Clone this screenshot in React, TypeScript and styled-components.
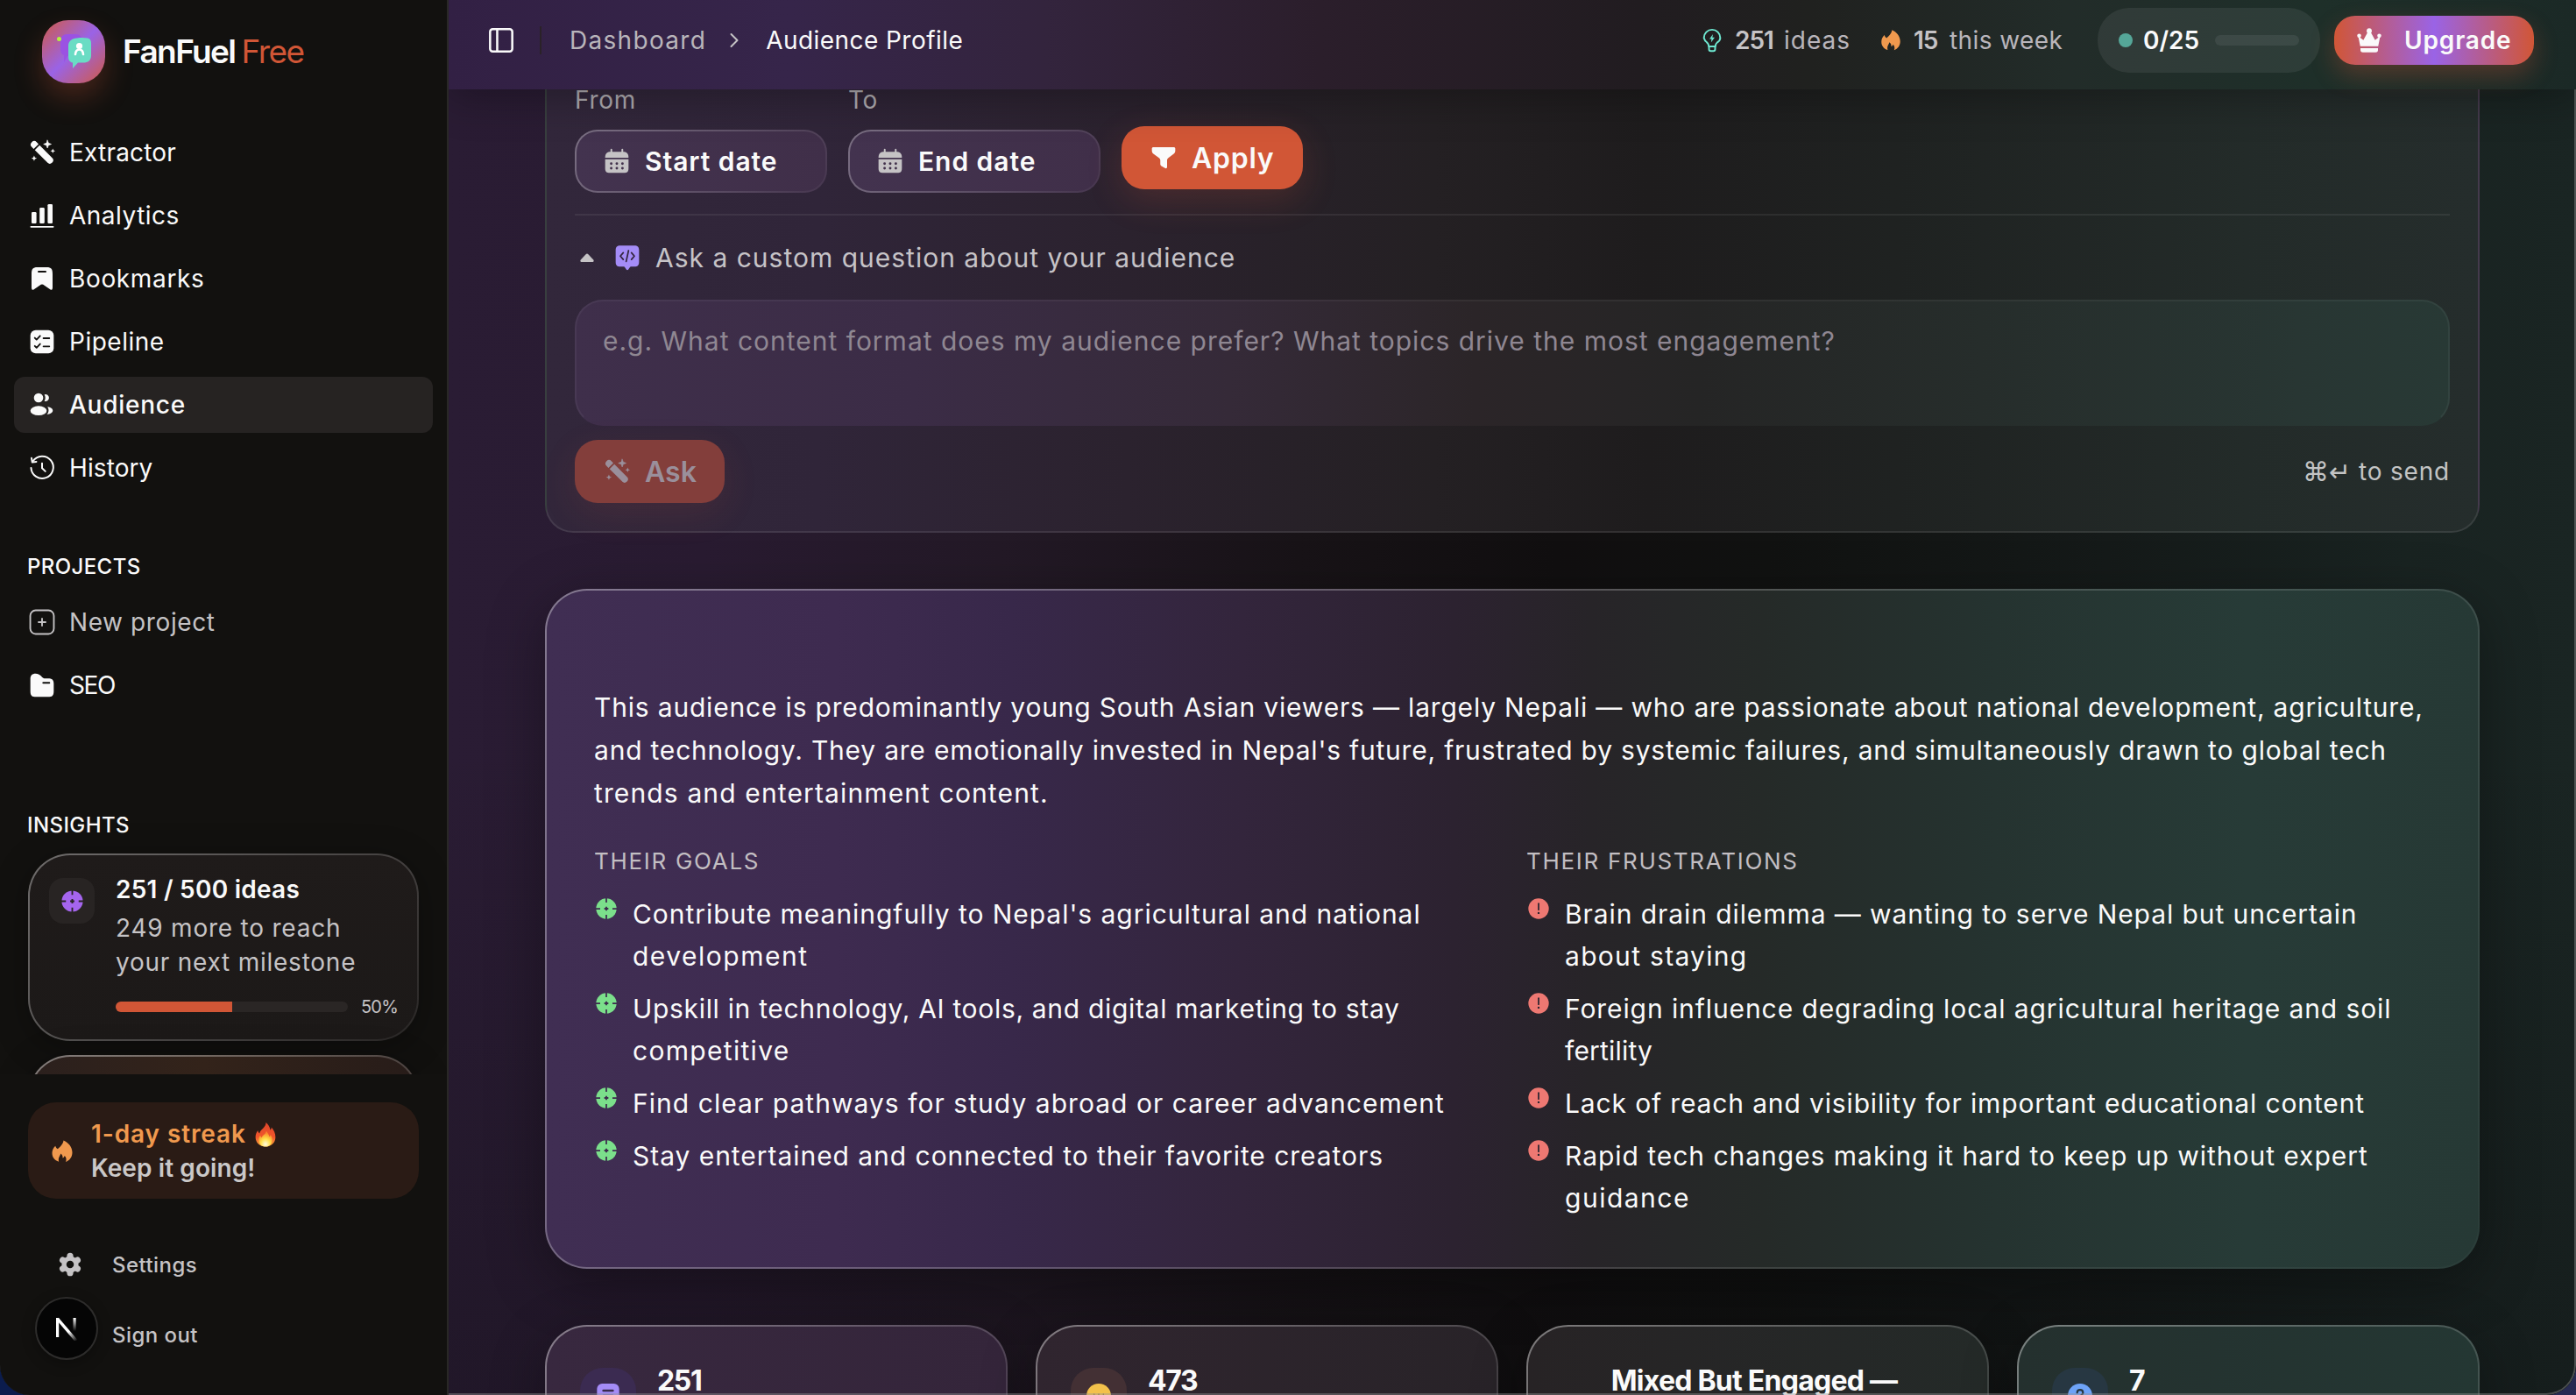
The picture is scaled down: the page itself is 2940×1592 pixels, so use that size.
import React from 'react';
import styled, { createGlobalStyle, css } from 'styled-components';

const colors = {
  sidebar: '#12110f',
  text: '#fafafa',
  muted: '#c5c3c5',
  primary: '#d15636',
  purple: '#9a63e6',
  violet: '#a48cf7',
  orange: '#f0994e',
  teal: '#6ee7d0',
  green: '#7bdf8b',
  red: '#ee7872',
};

const GlobalStyle = createGlobalStyle`
  * {
    box-sizing: border-box;
  }
  body {
    margin: 0;
    background: linear-gradient(90deg, #0b1c4d, #272b52);
    font-family: Inter, 'Open Sans', sans-serif;
    color: ${colors.text};
    overflow: hidden;
  }
  p, ul, h1, h2 {
    margin: 0;
    padding: 0;
    list-style: none;
  }
  svg {
    display: block;
    flex: none;
  }
`;

/* ---------- icons ---------- */

type IconProps = { size?: number; color?: string; cut?: string };

const Svg = ({ size = 32, children }: { size?: number; children: React.ReactNode }) => (
  <svg width={size} height={size} viewBox="0 0 24 24" fill="none" strokeLinecap="round" strokeLinejoin="round">
    {children}
  </svg>
);

const WandIcon = ({ size, color = colors.text }: IconProps) => (
  <Svg size={size}>
    <g fill={color}>
      <path d="M3.2 7.4a2.9 2.9 0 0 1 4.2-4.2L9 4.8 4.8 9z" />
      <path d="M9.9 5.8 20.7 16.6a2.9 2.9 0 0 1-4.1 4.1L5.8 9.9z" />
      <path d="M16.6 1.6 17.5 4l2.4.9-2.4.9-.9 2.4-.9-2.4-2.4-.9 2.4-.9z" stroke={color} strokeWidth=".5" />
      <path d="m21.2 8.6.6 1.5 1.5.6-1.5.6-.6 1.5-.6-1.5-1.5-.6 1.5-.6z" />
      <path d="m5.2 14.6.7 1.7 1.7.7-1.7.7-.7 1.7-.7-1.7-1.7-.7 1.7-.7z" />
    </g>
  </Svg>
);

const ChartIcon = () => (
  <Svg>
    <g fill={colors.text}>
      <rect x="3" y="9" width="4.2" height="9.8" rx="1" />
      <rect x="9.9" y="5.2" width="4.2" height="13.6" rx="1" />
      <rect x="16.8" y="2.2" width="4.2" height="16.6" rx="1" />
    </g>
    <path d="M2.5 21.6h19" stroke={colors.text} strokeWidth="1.3" />
  </Svg>
);

const BookmarkIcon = () => (
  <Svg>
    <path
      d="M3 8.2C3 3.6 4 2.2 8 2.2h8c4 0 5 1.4 5 6v11.4c0 2-1.200 2.500-2.600 1.300L14 17.800c-1.400-1.200-2.600-1.200-4 0l-4.400 3.100C4.200 22.100 3 21.600 3 19.600z"
      fill={colors.text}
    />
    <path d="M9 6h6" stroke={colors.sidebar} strokeWidth="1.5" />
  </Svg>
);

const ChecklistIcon = () => (
  <Svg>
    <rect x="2" y="2" width="20" height="20" rx="4.600" fill={colors.text} />
    <path
      d="m5.800 8.700 1.500 1.500 3-3.200M5.800 15.600l1.500 1.500 3-3.200M13.200 9h5M13.200 16h5"
      stroke={colors.sidebar}
      strokeWidth="1.4"
    />
  </Svg>
);

const UsersIcon = () => (
  <Svg>
    <g fill={colors.text}>
      <circle cx="9" cy="6" r="4" />
      <ellipse cx="9" cy="17" rx="7" ry="4" />
      <path d="M14 3.200A5.800 5.800 0 0 1 14 8.900a3 3 0 1 0 0-5.700z" />
      <path d="M16.600 13.600c1.400 1.900 1.400 4.700-.5 6.500 2.900-.1 5.100-1.400 5.100-3.200s-1.900-3.100-4.600-3.300z" />
    </g>
  </Svg>
);

const HistoryIcon = () => (
  <Svg>
    <g stroke={colors.text} strokeWidth="1.500">
      <path d="M4.200 6.200A9.500 9.500 0 1 1 2.600 12" />
      <path d="M3 3.600l.6 3.500 3.500-.4M12 8v4.200l2.800 2.700" />
    </g>
  </Svg>
);

const PlusSquareIcon = () => (
  <Svg>
    <rect x="1.900" y="1.900" width="20.200" height="20.200" rx="4.600" stroke={colors.muted} strokeWidth="1.400" />
    <path d="M12 9v6M9 12h6" stroke={colors.muted} strokeWidth="1.400" />
  </Svg>
);

const FolderIcon = () => (
  <Svg>
    <path
      d="M2 6.400C2 3.600 3.600 2 6.400 2c2.200 0 3.200.6 4.600 2l1.200 1.200c.8.7 1.400.9 2.400.9H17c3.600 0 5 1.200 5 4.500V17c0 3.800-1.200 5-5 5H7c-3.800 0-5-1.200-5-5z"
      fill={colors.text}
    />
    <path d="M13 10h5.200" stroke={colors.sidebar} strokeWidth="1.500" />
  </Svg>
);

const TargetIcon = ({ size, color, cut = colors.sidebar }: IconProps) => (
  <Svg size={size}>
    <circle cx="12" cy="12" r="10" fill={color} />
    <path d="M12 1.500v4.500M12 18v4.500M1.500 12h4.500M18 12h4.500" stroke={cut} strokeWidth="1.500" strokeLinecap="butt" />
    <path d="M12 10v4M10 12h4" stroke={cut} strokeWidth="1.600" strokeLinecap="butt" />
  </Svg>
);

const AlertIcon = ({ size, color, cut }: IconProps) => (
  <Svg size={size}>
    <circle cx="12" cy="12" r="10" fill={color} />
    <path d="M12 7v6" stroke={cut} strokeWidth="1.500" />
    <circle cx="12" cy="16.200" r="1" fill={cut} />
  </Svg>
);

const FlameIcon = ({ size }: IconProps) => (
  <Svg size={size}>
    <path
      d="M13.200 2c4.300 1.700 8 6 8 11 0 4-2.300 7.200-6 8.600.9-1.900.6-4-1-5.600-.5 1.200-1 1.700-1.800 2 .2-1.600-.4-3-1.800-4-.3 2-2.600 3.300-1.700 7.400C5.100 20.200 2.800 17.300 2.800 13.400c0-2.800 1.300-5.100 3-6.500.4 1.500 1.100 2.400 2.200 2.900C9.700 8 12.700 5.700 13.200 2z"
      fill={colors.orange}
    />
  </Svg>
);

const FireEmoji = () => (
  <svg width="26" height="30" viewBox="0 0 24 26">
    <defs>
      <linearGradient id="fire" x1="0" y1="0" x2="0" y2="1">
        <stop offset="0" stopColor="#e0452a" />
        <stop offset=".6" stopColor="#f0562b" />
        <stop offset="1" stopColor="#f7a93b" />
      </linearGradient>
      <radialGradient id="core" cx=".5" cy=".85" r=".7">
        <stop offset="0" stopColor="#fffbe0" />
        <stop offset=".5" stopColor="#ffe04a" />
        <stop offset="1" stopColor="#f98b2b" />
      </radialGradient>
    </defs>
    <path
      d="M12.500 0c2.300 2 4.200 4.300 4.500 8 .9-.8 1.300-1.600 1.300-2.800C20.800 8 22.500 11.500 22.500 15.500 22.500 21.500 18 25.500 12 25.500S1.500 21.500 1.500 15.600c0-3 1-5.400 2.500-7.300.2 1.600.7 2.500 1.700 3.200C6.500 7 12.500 5.500 12.500 0z"
      fill="url(#fire)"
    />
    <path
      d="M12.800 9c1.200 2 3 3.500 3.300 6 .8-.5 1-1.200 1-2 1.400 1.500 2 3.200 2 5 0 4.500-3 7.500-7 7.500s-7.200-2.800-7.200-7c0-2 .6-3.500 1.600-4.800.3 1.200.8 1.800 1.500 2.200C8.800 13 12.500 12.500 12.800 9z"
      fill="url(#core)"
    />
  </svg>
);

const GearIcon = () => (
  <Svg>
    <path d="M12 4.700v14.600M5.700 8.300l12.600 7.400M5.700 15.700l12.600-7.400" stroke={colors.muted} strokeWidth="5.400" />
    <circle cx="12" cy="12" r="7.200" fill={colors.muted} />
    <circle cx="12" cy="12" r="3.200" fill={colors.sidebar} />
  </Svg>
);

const PanelIcon = () => (
  <Svg>
    <rect x="2.500" y="2.500" width="19" height="19" rx="2.200" stroke={colors.text} strokeWidth="1.900" />
    <path d="M8.600 2.500v19" stroke={colors.text} strokeWidth="1.900" />
  </Svg>
);

const ChevronIcon = () => (
  <Svg size={24}>
    <path d="m8.500 5 7 7-7 7" stroke={colors.muted} strokeWidth="2" />
  </Svg>
);

const BulbIcon = () => (
  <Svg size={28}>
    <g stroke={colors.teal} strokeWidth="1.700">
      <path d="M8.600 18v-1c0-1.300-.8-2-1.700-3A8 8 0 0 1 4 9.600a8 8 0 0 1 16 0c0 1.800-1 3.200-2.900 4.400-1 1-1.700 1.700-1.700 3v1zM9 18.500v2c0 1.200.6 1.900 1.800 1.900h2.400c1.200 0 1.800-.7 1.800-1.900v-2" />
    </g>
    <path d="m12.800 6-3.300 4.700h2L11 14.200l3.500-5h-2.200z" fill={colors.teal} />
  </Svg>
);

const CrownIcon = () => (
  <Svg>
    <g fill={colors.text}>
      <circle cx="12" cy="3.900" r="2.200" />
      <circle cx="3.400" cy="8" r="1.700" />
      <circle cx="20.600" cy="8" r="1.700" />
      <path d="M2.600 8.500 4.300 17h15.400l1.700-8.500-4.400 3.400L12.700 4h-1.400L7 11.900z" />
      <path d="M4.500 18.700h15v1.600c0 1.300-.7 2-2 2h-11c-1.300 0-2-.7-2-2z" />
    </g>
  </Svg>
);

const CalendarIcon = () => (
  <Svg>
    <path d="M7.300 2v4M16.700 2v4" stroke={colors.muted} strokeWidth="1.500" />
    <path d="M2 9C2 5.400 3.600 4 7 4h10c3.400 0 5 1.400 5 5z" fill={colors.muted} />
    <path d="M2 10.400h20V18c0 3-1.200 4-4 4H6c-2.800 0-4-1-4-4z" fill={colors.muted} />
    {[7.2, 12, 16.8].map((x) =>
      [14, 18].map((y) => <circle key={`${x}-${y}`} cx={x} cy={y} r="1.100" fill="#42324c" />)
    )}
  </Svg>
);

const FilterIcon = () => (
  <Svg>
    <path
      d="M2 4.200C2 3.400 2.500 3 3.400 3h17.200c.9 0 1.400.4 1.400 1.200v1.600c0 1.400-.4 2.200-1.500 3.100L16.300 12c-1 .8-1.300 1.300-1.300 2.500v5.200c0 1.400-.8 1.800-1.900 1.100l-2.600-1.500c-1-.6-1.300-1.100-1.300-2.100v-2.700c0-1.200-.3-1.700-1.300-2.500L3.500 8.900C2.400 8 2 7.200 2 5.800z"
      fill={colors.text}
    />
  </Svg>
);

const CodeBubbleIcon = () => (
  <Svg>
    <path
      d="M6 1.700h12c2.800 0 4 1.200 4 4v10c0 2.800-1.200 4-4 4h-2.600c-.8 0-1 .3-1.500 1l-1 1.500c-.5.700-1.300.700-1.800 0l-1-1.500c-.5-.7-.7-1-1.500-1H6c-2.800 0-4-1.200-4-4v-10c0-2.800 1.200-4 4-4z"
      fill={colors.violet}
    />
    <path d="M8.500 7.800 6 10.700l2.500 2.900M15.500 7.800l2.500 2.900-2.500 2.900M13 6l-2 9.300" stroke="#33253f" strokeWidth="1.300" />
  </Svg>
);

const CaretIcon = () => (
  <svg width="18" height="12" viewBox="0 0 18 12">
    <path d="M7.600 2.200 1.700 8.600C1 9.400 1.300 11 2.500 11h13c1.200 0 1.500-1.600.8-2.400L10.400 2.200c-.8-.9-2-.9-2.800 0z" fill={colors.muted} />
  </svg>
);

const NoteIcon = () => (
  <Svg>
    <rect x="2.500" y="1.500" width="19" height="21" rx="4.500" fill={colors.violet} />
    <path d="M8 7.500h8M8 12h8" stroke="#3b2c4e" strokeWidth="2" />
  </Svg>
);

const FaceIcon = () => (
  <Svg>
    <circle cx="12" cy="12" r="10.500" fill="#f3c14b" />
    <path d="M8 10.500v2M12 10.500v2M16 10.500v2" stroke="#a07a38" strokeWidth="1" />
  </Svg>
);

const QuestionIcon = () => (
  <Svg>
    <circle cx="12" cy="12" r="10.500" fill="#6ea3f7" />
    <path d="M9.500 9.300c0-3.300 5-3.300 5 0 0 1.800-2.500 2-2.500 4" stroke="#27373f" strokeWidth="1.600" />
  </Svg>
);

const LogoMark = () => (
  <svg width="72" height="72" viewBox="0 0 72 72">
    <path d="M29 16h9c5 0 8 3 8 8v9c0 5-3 8-8 8h-9l-4 7v-8c-3-1-4-4-4-7v-9c0-5 3-8 8-8z" fill="#9b52e2" />
    <path
      d="M40 20.500c5-.8 8-.5 12 0 3 .6 4 2.500 4 6V40c0 5-2 7.500-7 8.500h-8L35 55v-6.500c-4-.7-5-3.500-5-7.500V29c0-5 4-8 10-8.500z"
      fill="#6adcc4"
    />
    <circle cx="42.500" cy="29.500" r="3.600" fill="#fff" />
    <path d="M38 39c.3-3.600 2-5.500 4.500-5.500S46.700 35.400 47 39" stroke="#fff" strokeWidth="2.600" fill="none" strokeLinecap="round" />
    <circle cx="19.500" cy="21.500" r="2.500" fill="#b5f23d" />
  </svg>
);

const NextMark = () => (
  <svg width="28" height="28" viewBox="0 0 28 28">
    <defs>
      <linearGradient id="stem" x1="0" y1="0" x2="0" y2="1">
        <stop offset="0" stopColor="#fff" />
        <stop offset="1" stopColor="#fff" stopOpacity="0" />
      </linearGradient>
      <linearGradient id="slash" gradientUnits="userSpaceOnUse" x1="16" y1="18" x2="26" y2="28">
        <stop offset="0" stopColor="#fff" />
        <stop offset="1" stopColor="#fff" stopOpacity="0" />
      </linearGradient>
    </defs>
    <rect x="2" y="2" width="3.200" height="22" fill="#fff" />
    <path d="M3.500 2.800 25 28" stroke="url(#slash)" strokeWidth="3.400" />
    <rect x="21.500" y="2" width="3.200" height="15" fill="url(#stem)" />
  </svg>
);

/* ---------- shared ---------- */

type TextProps = { $track?: number };

const track = css<TextProps>`
  letter-spacing: ${(p) => p.$track ?? 0}px;
`;

const glassBorder = (fill: string, from = 0.3, to = 0.06) => css`
  border: 2px solid transparent;
  background: ${fill} padding-box,
    linear-gradient(135deg, rgba(255, 255, 255, ${from}), rgba(255, 255, 255, ${to})) border-box,
    ${fill} border-box;
`;

const Shell = styled.div`
  position: relative;
  display: flex;
  width: 2940px;
  height: 1592px;
  border-radius: 0 0 34px 34px;
  overflow: hidden;
  background: #100f10;
`;

/* window outline, drawn over everything */
const Frame = styled.div`
  position: absolute;
  inset: 0;
  border: 2px solid rgba(150, 150, 150, 0.42);
  border-top: 0;
  border-radius: 0 0 34px 34px;
  pointer-events: none;
`;

/* ---------- sidebar ---------- */

const Sidebar = styled.aside`
  position: relative;
  z-index: 2;
  display: flex;
  flex-direction: column;
  width: 512px;
  background: ${colors.sidebar};
  border-right: 2px solid #292826;
`;

const SidebarScroll = styled.div`
  height: 1226px;
  overflow: hidden;
`;

const Brand = styled.div`
  display: flex;
  align-items: center;
  gap: 20px;
  padding: 22px 0 0 48px;
`;

const BrandBadge = styled.div`
  width: 72px;
  height: 72px;
  border-radius: 30px;
  background: linear-gradient(135deg, #d15a45 0%, #9a63e6 50%, #d15a45 100%);
  box-shadow: 0 16px 32px rgba(209, 86, 54, 0.28);
`;

const BrandName = styled.div`
  display: flex;
  gap: 7px;
  font-size: 37px;
  line-height: 74px;
  font-weight: 600;
  letter-spacing: -1.6px;
`;

const Plan = styled.span`
  font-weight: 400;
  letter-spacing: -1.5px;
  color: ${colors.primary};
`;

const Nav = styled.nav`
  display: flex;
  flex-direction: column;
  gap: 8px;
  padding: 46px 16px 0;
`;

const NavItem = styled.a<{ $active?: boolean; $muted?: boolean; $track?: number }>`
  display: flex;
  align-items: center;
  gap: 15px;
  height: 64px;
  padding: 0 16px;
  border-radius: 12px;
  font-size: 28px;
  font-weight: ${(p) => (p.$active ? 500 : 400)};
  color: ${(p) => (p.$muted ? colors.muted : colors.text)};
  background: ${(p) => (p.$active ? '#262322' : 'transparent')};
  ${track}
`;

const GroupTitle = styled.h2<{ $top: number }>`
  padding-left: 31px;
  margin-top: ${(p) => p.$top}px;
  font-size: 24px;
  line-height: 32px;
  font-weight: 500;
  letter-spacing: 0.4px;
`;

const ProjectList = styled(Nav)`
  padding-top: 15px;
`;

const Insights = styled.div`
  display: flex;
  flex-direction: column;
  gap: 16px;
  padding: 16px 32px 0;
`;

const InsightCard = styled.div<{ $warm?: boolean }>`
  display: flex;
  gap: 24px;
  height: 214px;
  padding: 20px 22px;
  border-radius: 48px;
  box-shadow: 0 8px 40px rgba(0, 0, 0, 0.3);
  ${(p) =>
    p.$warm
      ? glassBorder('linear-gradient(90deg, #2b201d, #33231a 45%, #271c19)', 0.42)
      : glassBorder('linear-gradient(#1f1b1a, #1c1918)', 0.36)}
`;

const InsightIcon = styled.div`
  display: grid;
  place-items: center;
  flex: none;
  width: 52px;
  height: 52px;
  margin-top: 6px;
  border-radius: 16px;
  background: #282423;
`;

const InsightBody = styled.div`
  flex: 1;
  color: ${colors.muted};
  font-size: 28px;
  line-height: 39px;
`;

const InsightTitle = styled.div`
  height: 44px;
  line-height: 38px;
  font-weight: 600;
  letter-spacing: 0.25px;
  color: ${colors.text};
`;

const InsightLine = styled.div<TextProps>`
  white-space: nowrap;
  ${track}
`;

const ProgressRow = styled.div`
  display: flex;
  align-items: center;
  gap: 15px;
  margin-top: 15px;
  font-size: 20px;
  line-height: 32px;
  letter-spacing: -0.8px;
`;

const Progress = styled.div`
  width: 265px;
  height: 12px;
  border-radius: 6px;
  overflow: hidden;
  background: #2a2625;
`;

const ProgressFill = styled.div`
  height: 100%;
  background: ${colors.primary};
`;

const SidebarFooter = styled.div`
  display: flex;
  flex-direction: column;
  padding: 32px 32px 0;
`;

const Streak = styled.div`
  display: flex;
  align-items: center;
  gap: 18px;
  height: 110px;
  padding: 2px 0 0 24px;
  border-radius: 32px;
  background: #2a1b15;
  font-size: 28px;
  line-height: 39px;
  font-weight: 600;
  letter-spacing: 0.1px;
  color: #cac8c8;
`;

const StreakTitle = styled.div`
  display: flex;
  align-items: center;
  gap: 9px;
  letter-spacing: 0.9px;
  color: ${colors.orange};
`;

const FooterLinks = styled.div`
  display: flex;
  flex-direction: column;
  gap: 16px;
  padding: 43px 0 0 8px;
`;

const FooterLink = styled.a`
  display: flex;
  align-items: center;
  height: 64px;
  font-size: 24px;
  font-weight: 500;
  letter-spacing: 0.45px;
  color: ${colors.muted};
`;

const FooterIcon = styled.span`
  display: grid;
  place-items: center;
  width: 80px;
  margin-right: 8px;
`;

const DevBadge = styled.span`
  display: grid;
  place-items: center;
  width: 72px;
  height: 72px;
  margin: -14px 16px 0 0;
  border: 2px solid #2d2c2b;
  border-radius: 50%;
  background: #050505;
  box-shadow: 0 4px 16px rgba(0, 0, 0, 0.3);
`;

/* ---------- header ---------- */

const Main = styled.main`
  flex: 1;
  min-width: 0;
  display: flex;
  flex-direction: column;
`;

const Header = styled.header`
  position: relative;
  z-index: 1;
  display: flex;
  align-items: center;
  flex: none;
  height: 102px;
  padding: 0 48px 11px 44px;
  font-size: 28px;
  color: ${colors.muted};
  background: linear-gradient(
    90deg,
    #322044 0%,
    #36254a 16%,
    #33243d 28%,
    #2b1e2b 41%,
    #211c20 56%,
    #20211f 64%,
    #222c29 76%,
    #1e2f29 88%,
    #1b2926 100%
  );
  box-shadow: 0 8px 50px rgba(0, 0, 0, 0.3);
`;

const HeaderDivider = styled.div`
  width: 2px;
  height: 32px;
  margin: 0 32px 0 28px;
  background: #2a2228;
`;

const Crumb = styled.span<{ $current?: boolean; $track?: number }>`
  color: ${(p) => (p.$current ? colors.text : '#b9b5bb')};
  ${track}
`;

const CrumbArrow = styled.span`
  padding: 0 24px 0 20px;
`;

const HeaderStat = styled.div<{ $width: number }>`
  display: flex;
  align-items: center;
  width: ${(p) => p.$width}px;
`;

const Spacer = styled.div`
  flex: 1;
`;

const StatNumber = styled.b<{ $width: number }>`
  width: ${(p) => p.$width}px;
  margin-left: 12px;
  font-weight: 600;
  letter-spacing: -1px;
`;

const Quota = styled.div`
  display: flex;
  align-items: center;
  width: 254px;
  height: 74px;
  padding: 0 24px;
  margin-right: 16px;
  border-radius: 36px;
  background: rgba(255, 255, 255, 0.07);
  font-weight: 600;
  color: ${colors.text};
`;

const Dot = styled.span`
  width: 16px;
  height: 16px;
  margin-right: 12px;
  border-radius: 50%;
  background: #55a698;
`;

const QuotaBar = styled.span`
  width: 96px;
  height: 12px;
  margin-left: auto;
  border-radius: 6px;
  background: rgba(255, 255, 255, 0.07);
`;

const Upgrade = styled.button`
  display: flex;
  align-items: center;
  gap: 24px;
  width: 228px;
  height: 56px;
  padding: 0 0 0 24px;
  border: 0;
  border-radius: 24px;
  background: linear-gradient(90deg, #d15636, #9a63e6 50%, #d15636);
  box-shadow: 0 12px 28px rgba(209, 86, 54, 0.3);
  font: 600 28px Inter, sans-serif;
  letter-spacing: 0.85px;
  color: ${colors.text};
`;

/* ---------- content ---------- */

const Content = styled.div`
  flex: 1;
  min-height: 0;
  overflow: hidden;
  padding: 0 110px;
  background: linear-gradient(180deg, rgba(12, 12, 14, 0) 50%, rgba(12, 12, 14, 0.3) 100%),
    linear-gradient(
      90deg,
      #2a1c34 0%,
      #291b31 12%,
      #231926 26%,
      #181317 40%,
      #110f10 52%,
      #111211 62%,
      #151a19 78%,
      #192321 92%,
      #1a2523 100%
    );
`;

const FilterCard = styled.section`
  width: 2208px;
  height: 546px;
  margin-top: -40px;
  padding: 30px 32px;
  border: 2px solid rgba(255, 255, 255, 0.09);
  border-radius: 32px;
  background: linear-gradient(
    90deg,
    #32273b 0%,
    #302539 14%,
    #2b222e 30%,
    #242023 46%,
    #1e1c1d 57%,
    #1f2221 70%,
    #232b29 88%,
    #252d2c 100%
  );
`;

const Filters = styled.div`
  display: flex;
  align-items: flex-end;
  gap: 25px;
  padding-bottom: 24px;
  border-bottom: 2px solid rgba(255, 255, 255, 0.07);
`;

const Field = styled.div`
  width: 287px;
`;

const FieldLabel = styled.div`
  height: 54px;
  padding-top: 8px;
  line-height: 25px;
  font-size: 28px;
  letter-spacing: 0.7px;
  color: #aeaaaf;
`;

const DateButton = styled.button`
  display: flex;
  align-items: center;
  gap: 16px;
  width: 288px;
  height: 72px;
  padding: 0 30px;
  border-radius: 26px;
  font: 600 30px Inter, sans-serif;
  letter-spacing: 0.95px;
  color: ${colors.text};
  ${glassBorder('linear-gradient(90deg, #43334f, #402f49)', 0.3, 0.03)}
`;

const ActionButton = styled.button<{ $disabled?: boolean; $width: number; $track?: number }>`
  display: flex;
  align-items: center;
  gap: 16px;
  width: ${(p) => p.$width}px;
  height: 72px;
  padding: 0 32px;
  border: 0;
  border-radius: 26px;
  background: ${(p) => (p.$disabled ? '#833e3b' : colors.primary)};
  box-shadow: 0 12px 40px rgba(209, 86, 54, ${(p) => (p.$disabled ? 0.12 : 0.2)});
  font: 600 32px Inter, sans-serif;
  color: ${(p) => (p.$disabled ? '#9a8f9b' : colors.text)};
  ${track}
`;

const Lifted = styled.div`
  margin-bottom: 4px;
`;

const QuestionToggle = styled.div`
  display: flex;
  align-items: center;
  height: 96px;
  padding-left: 5px;
  font-size: 30px;
  letter-spacing: 1px;
  color: #c6c3c7;
`;

const ToggleIcon = styled.span`
  margin: 0 16px 0 21px;
`;

const QuestionInput = styled.div`
  height: 144px;
  padding: 22px 30px;
  border: 2px solid rgba(255, 255, 255, 0.05);
  border-bottom-color: transparent;
  border-radius: 32px;
  background: linear-gradient(
      90deg,
      #3f2f4b 0%,
      #3b2c46 18%,
      #352a38 35%,
      #2b2528 48%,
      #252525 60%,
      #262d2b 75%,
      #283633 92%,
      #283935 100%
    )
    border-box;
  font-size: 30px;
  line-height: 47px;
  letter-spacing: 0.99px;
  color: #8f8792;
`;

const AskRow = styled.div`
  display: flex;
  align-items: center;
  justify-content: space-between;
  margin-top: 16px;
`;

const Hint = styled.span`
  display: flex;
  align-items: center;
  font-size: 28px;
  letter-spacing: 0.8px;
  color: #c3c4c4;
`;

const Keys = styled.kbd`
  margin-right: 9px;
  font: 30px 'DejaVu Sans', sans-serif;
  letter-spacing: 0;
`;

const SummaryCard = styled.section`
  width: 2208px;
  height: 776px;
  margin-top: 64px;
  padding: 109px 54px 0;
  border-radius: 48px;
  box-shadow: 0 16px 64px rgba(0, 0, 0, 0.35);
  ${glassBorder(
    `linear-gradient(90deg, #402e53 0%, #3e2b50 15%, #38284a 24%, #33253c 36%, #2c2230 47%,
      #272428 54%, #252a28 63%, #253330 75%, #273b37 88%, #263935 100%)`,
    0.36,
    0.02
  )}
`;

const Paragraph = styled.p`
  font-size: 30px;
  line-height: 48.75px;
  white-space: nowrap;
`;

const Line = styled.span<TextProps>`
  display: block;
  ${track}
`;

const Columns = styled.div`
  display: grid;
  grid-template-columns: 1fr 1fr;
  gap: 32px;
  margin-top: 34px;
`;

const ColumnTitle = styled.h2`
  margin-bottom: 17px;
  font-size: 26px;
  line-height: 39px;
  font-weight: 400;
  letter-spacing: 1.7px;
  color: #c2bec2;
`;

const PointList = styled.ul`
  display: flex;
  flex-direction: column;
  gap: 12px;
`;

const Point = styled.li`
  display: flex;
  gap: 16px;
  font-size: 30px;
  line-height: 48px;
  white-space: nowrap;
`;

const PointIcon = styled.span`
  padding-top: 4px;
`;

const StatGrid = styled.div`
  display: grid;
  grid-template-columns: repeat(4, 528px);
  gap: 32px;
  margin-top: 64px;
`;

const StatCard = styled.div<{ $fill: string; $center?: boolean }>`
  display: flex;
  justify-content: ${(p) => (p.$center ? 'center' : 'flex-start')};
  gap: 24px;
  height: 240px;
  padding: 42px ${(p) => (p.$center ? 46 : 38)}px 0 38px;
  border-radius: 48px;
  box-shadow: 0 16px 64px rgba(0, 0, 0, 0.3);
  ${(p) => glassBorder(p.$fill, 0.4)}
`;

const StatIcon = styled.div<{ $bg: string }>`
  display: grid;
  place-items: center;
  width: 64px;
  height: 64px;
  margin-top: 5px;
  border-radius: 26px;
  background: ${(p) => p.$bg};
`;

const StatValue = styled.div<TextProps>`
  font-size: 32px;
  line-height: 40px;
  font-weight: 700;
  ${track}
`;

/* ---------- data ---------- */

const navItems = [
  { label: 'Extractor', icon: <WandIcon />, track: 0.2 },
  { label: 'Analytics', icon: <ChartIcon />, track: 0.5 },
  { label: 'Bookmarks', icon: <BookmarkIcon />, track: 0.65 },
  { label: 'Pipeline', icon: <ChecklistIcon />, track: 0.5 },
  { label: 'Audience', icon: <UsersIcon />, track: 0.75, active: true },
  { label: 'History', icon: <HistoryIcon />, track: 0.1 },
];

const summary = [
  {
    text: 'This audience is predominantly young South Asian viewers — largely Nepali — who are passionate about national development, agriculture,',
    track: 0.815,
  },
  {
    text: "and technology. They are emotionally invested in Nepal's future, frustrated by systemic failures, and simultaneously drawn to global tech",
    track: 0.79,
  },
  { text: 'trends and entertainment content.', track: 1.13 },
];

const goals = [
  [
    { text: "Contribute meaningfully to Nepal's agricultural and national", track: 0.96 },
    { text: 'development', track: 1.5 },
  ],
  [
    { text: 'Upskill in technology, AI tools, and digital marketing to stay', track: 0.68 },
    { text: 'competitive', track: 1.3 },
  ],
  [{ text: 'Find clear pathways for study abroad or career advancement', track: 1.04 }],
  [{ text: 'Stay entertained and connected to their favorite creators', track: 0.96 }],
];

const frustrations = [
  [
    { text: 'Brain drain dilemma — wanting to serve Nepal but uncertain', track: 0.92 },
    { text: 'about staying', track: 1.3 },
  ],
  [
    { text: 'Foreign influence degrading local agricultural heritage and soil', track: 0.91 },
    { text: 'fertility', track: 0.2 },
  ],
  [{ text: 'Lack of reach and visibility for important educational content', track: 0.86 }],
  [
    { text: 'Rapid tech changes making it hard to keep up without expert', track: 0.97 },
    { text: 'guidance', track: 1.5 },
  ],
];

type PointsProps = { title: string; points: { text: string; track: number }[][]; icon: React.ReactNode };

const Points = ({ title, points, icon }: PointsProps) => (
  <div>
    <ColumnTitle>{title}</ColumnTitle>
    <PointList>
      {points.map((lines) => (
        <Point key={lines[0].text}>
          <PointIcon>{icon}</PointIcon>
          <div>
            {lines.map((line) => (
              <Line key={line.text} $track={line.track}>
                {line.text}
              </Line>
            ))}
          </div>
        </Point>
      ))}
    </PointList>
  </div>
);

const AppSidebar = () => {
  const progress = 50;

  return (
    <Sidebar>
      <SidebarScroll>
        <Brand>
          <BrandBadge>
            <LogoMark />
          </BrandBadge>
          <BrandName>
            FanFuel<Plan>Free</Plan>
          </BrandName>
        </Brand>
        <Nav>
          {navItems.map((item) => (
            <NavItem key={item.label} $active={item.active} $track={item.track}>
              {item.icon}
              {item.label}
            </NavItem>
          ))}
        </Nav>
        <GroupTitle $top={65}>PROJECTS</GroupTitle>
        <ProjectList>
          <NavItem $muted $track={0.6}>
            <PlusSquareIcon />
            New project
          </NavItem>
          <NavItem $track={-1.4}>
            <FolderIcon />
            SEO
          </NavItem>
        </ProjectList>
        <GroupTitle $top={112}>INSIGHTS</GroupTitle>
        <Insights>
          <InsightCard>
            <InsightIcon>
              <TargetIcon size={29} color="#a565ee" cut="#282423" />
            </InsightIcon>
            <InsightBody>
              <InsightTitle>251 / 500 ideas</InsightTitle>
              <InsightLine $track={0.78}>249 more to reach</InsightLine>
              <InsightLine $track={0.76}>your next milestone</InsightLine>
              <ProgressRow>
                <Progress>
                  <ProgressFill style={{ width: `${progress}%` }} />
                </Progress>
                {progress}%
              </ProgressRow>
            </InsightBody>
          </InsightCard>
          <InsightCard $warm />
        </Insights>
      </SidebarScroll>
      <SidebarFooter>
        <Streak>
          <FlameIcon size={30} />
          <div>
            <StreakTitle>
              1-day streak <FireEmoji />
            </StreakTitle>
            <div>Keep it going!</div>
          </div>
        </Streak>
        <FooterLinks>
          <FooterLink>
            <FooterIcon>
              <GearIcon />
            </FooterIcon>
            Settings
          </FooterLink>
          <FooterLink>
            <DevBadge>
              <NextMark />
            </DevBadge>
            Sign out
          </FooterLink>
        </FooterLinks>
      </SidebarFooter>
    </Sidebar>
  );
};

const AppHeader = () => (
  <Header>
    <PanelIcon />
    <HeaderDivider />
    <Crumb $track={1.3}>Dashboard</Crumb>
    <CrumbArrow>
      <ChevronIcon />
    </CrumbArrow>
    <Crumb $current $track={0.45}>
      Audience Profile
    </Crumb>
    <Spacer />
    <HeaderStat $width={204}>
      <BulbIcon />
      <StatNumber $width={56}>251</StatNumber>
      <Crumb $track={1}>ideas</Crumb>
    </HeaderStat>
    <HeaderStat $width={250}>
      <FlameIcon size={28} />
      <StatNumber $width={41}>15</StatNumber>
      <Crumb $track={0.4}>this week</Crumb>
    </HeaderStat>
    <Quota>
      <Dot />
      0/25
      <QuotaBar />
    </Quota>
    <Upgrade>
      <CrownIcon />
      Upgrade
    </Upgrade>
  </Header>
);

const App = () => (
  <>
    <GlobalStyle />
    <Shell>
      <AppSidebar />
      <Main>
        <AppHeader />
        <Content>
          <FilterCard>
            <Filters>
              <Field>
                <FieldLabel>From</FieldLabel>
                <DateButton>
                  <CalendarIcon />
                  Start date
                </DateButton>
              </Field>
              <Field>
                <FieldLabel>To</FieldLabel>
                <DateButton>
                  <CalendarIcon />
                  End date
                </DateButton>
              </Field>
              <Lifted>
                <ActionButton $width={207} $track={0.75}>
                  <FilterIcon />
                  Apply
                </ActionButton>
              </Lifted>
            </Filters>
            <QuestionToggle>
              <CaretIcon />
              <ToggleIcon>
                <CodeBubbleIcon />
              </ToggleIcon>
              Ask a custom question about your audience
            </QuestionToggle>
            <QuestionInput>
              e.g. What content format does my audience prefer? What topics drive the most engagement?
            </QuestionInput>
            <AskRow>
              <ActionButton $width={171} $disabled>
                <WandIcon color="#9a8f9b" />
                Ask
              </ActionButton>
              <Hint>
                <Keys>⌘↵</Keys>
                to send
              </Hint>
            </AskRow>
          </FilterCard>

          <SummaryCard>
            <Paragraph>
              {summary.map((line) => (
                <Line key={line.text} $track={line.track}>
                  {line.text}
                </Line>
              ))}
            </Paragraph>
            <Columns>
              <Points
                title="THEIR GOALS"
                points={goals}
                icon={<TargetIcon size={28} color={colors.green} cut="#3d2b4e" />}
              />
              <Points
                title="THEIR FRUSTRATIONS"
                points={frustrations}
                icon={<AlertIcon size={28} color={colors.red} cut="#2a2430" />}
              />
            </Columns>
          </SummaryCard>

          <StatGrid>
            <StatCard $fill="linear-gradient(90deg, #38283f, #34253a)">
              <StatIcon $bg="#3b2b51">
                <NoteIcon />
              </StatIcon>
              <StatValue $track={-1.3}>251</StatValue>
            </StatCard>
            <StatCard $fill="linear-gradient(90deg, #30252f, #282328)">
              <StatIcon $bg="#433034">
                <FaceIcon />
              </StatIcon>
              <StatValue $track={-1.3}>473</StatValue>
            </StatCard>
            <StatCard $center $fill="linear-gradient(90deg, #272325, #242a28)">
              <StatValue $track={-0.75}>Mixed But Engaged —</StatValue>
            </StatCard>
            <StatCard $fill="linear-gradient(90deg, #24302e, #243733)">
              <StatIcon $bg="#273742">
                <QuestionIcon />
              </StatIcon>
              <StatValue>7</StatValue>
            </StatCard>
          </StatGrid>
        </Content>
      </Main>
      <Frame />
    </Shell>
  </>
);

export default App;
